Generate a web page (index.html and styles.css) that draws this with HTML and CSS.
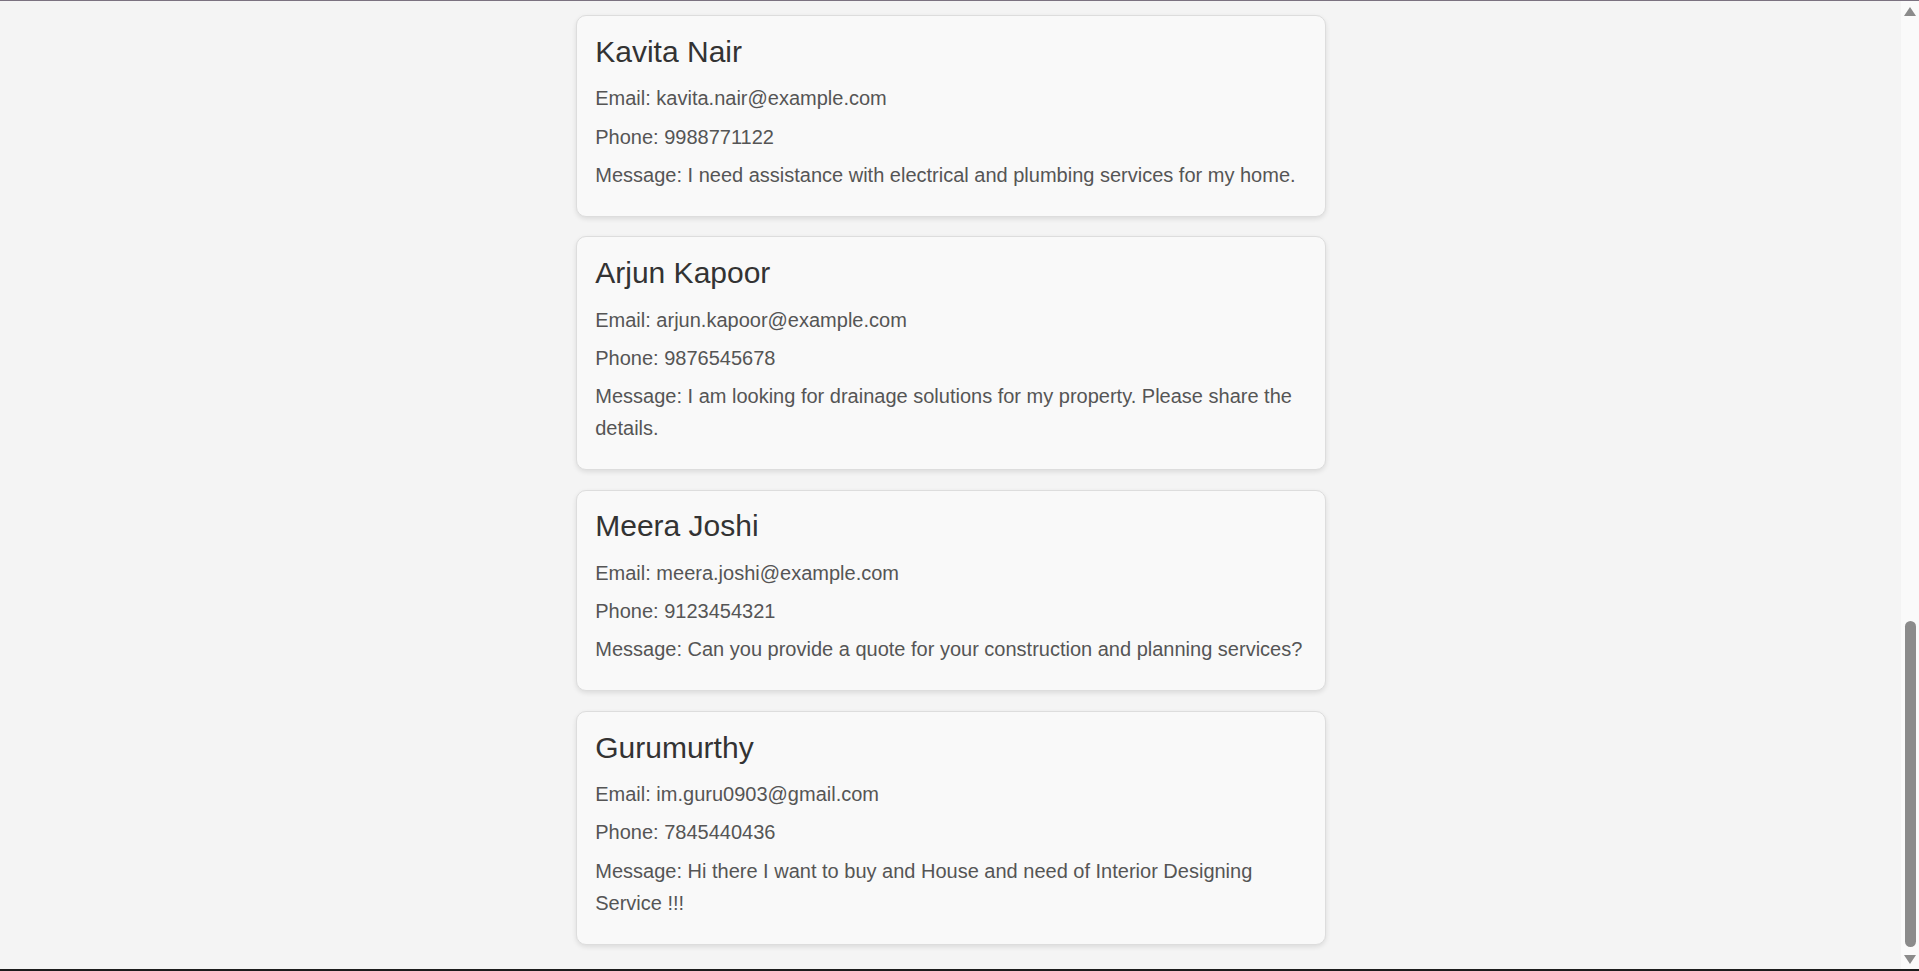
FILE: index.html
```html
<!DOCTYPE html>
<html lang="en">
<head>
<meta charset="utf-8">
<title>Contact Messages</title>
<link rel="stylesheet" href="styles.css">
</head>
<body>
<div class="frame-top"></div>
<main class="container">
  <div class="card">
    <h2>Kavita Nair</h2>
    <p>Email: kavita.nair@example.com</p>
    <p>Phone: 9988771122</p>
    <p>Message: I need assistance with electrical and plumbing services for my home.</p>
  </div>
  <div class="card">
    <h2>Arjun Kapoor</h2>
    <p>Email: arjun.kapoor@example.com</p>
    <p>Phone: 9876545678</p>
    <p>Message: I am looking for drainage solutions for my property. Please share the details.</p>
  </div>
  <div class="card">
    <h2>Meera Joshi</h2>
    <p>Email: meera.joshi@example.com</p>
    <p>Phone: 9123454321</p>
    <p>Message: Can you provide a quote for your construction and planning services?</p>
  </div>
  <div class="card">
    <h2>Gurumurthy</h2>
    <p>Email: im.guru0903@gmail.com</p>
    <p>Phone: 7845440436</p>
    <p>Message: Hi there I want to buy and House and need of Interior Designing Service !!!</p>
  </div>
</main>
<div class="scrollbar" aria-hidden="true">
  <div class="sb-btn sb-up">
    <svg width="12" height="9" viewBox="0 0 12 9"><polygon points="0,9 6,0 12,9" fill="#8b8b8b"/></svg>
  </div>
  <div class="sb-track">
    <div class="sb-thumb"></div>
  </div>
  <div class="sb-btn sb-down">
    <svg width="12" height="9" viewBox="0 0 12 9"><polygon points="0,0 12,0 6,9" fill="#8b8b8b"/></svg>
  </div>
</div>
<div class="frame-bottom"></div>
</body>
</html>
```

FILE: styles.css
```css
html,
body {
  height: 100%;
  overflow: hidden;
}

body {
  margin: 0;
  padding-right: 18px;
  box-sizing: border-box;
  background: #f4f4f4;
  font-family: "Liberation Sans", Arial, sans-serif;
  color: #555;
}

.container {
  max-width: 750px;
  margin: 0 auto;
  padding: 15px 0 0;
}

.card {
  background: #f9f9f9;
  border: 1px solid #dddddd;
  border-radius: 10px;
  padding: 18.75px;
  margin-bottom: 19.5px;
  box-shadow: 0 2px 5px rgba(0, 0, 0, 0.1);
}

.card h2 {
  margin: 0 0 13.5px;
  font-size: 30px;
  font-weight: normal;
  line-height: normal;
  color: #333;
}

.card p {
  margin: 6.25px 0;
  font-size: 20px;
  line-height: 32px;
  color: #555;
}

/* window scrollbar (page is scrolled to its end) */
.scrollbar {
  position: fixed;
  top: 0;
  right: 0;
  bottom: 0;
  width: 18px;
  background: #fafafa;
  display: flex;
  flex-direction: column;
  align-items: center;
}

.sb-btn {
  height: 18px;
  flex: none;
  display: flex;
  justify-content: center;
  align-items: flex-start;
  box-sizing: border-box;
}

.sb-btn svg {
  display: block;
}

.sb-up {
  padding-top: 7px;
}

.sb-down {
  padding-top: 2px;
}

.sb-track {
  flex: 1;
  width: 100%;
  display: flex;
  flex-direction: column;
  justify-content: flex-end;
  align-items: center;
  padding-bottom: 6px;
  box-sizing: border-box;
}

.sb-thumb {
  width: 11px;
  height: 326px;
  border-radius: 6px;
  background: #8b8b8b;
}

.frame-top {
  position: fixed;
  top: 0;
  left: 0;
  right: 0;
  height: 1px;
  background: #7b7280;
  z-index: 10;
}

.frame-bottom {
  position: fixed;
  bottom: 0;
  left: 0;
  right: 0;
  height: 2px;
  background: #1c1c1c;
  z-index: 10;
}
```
